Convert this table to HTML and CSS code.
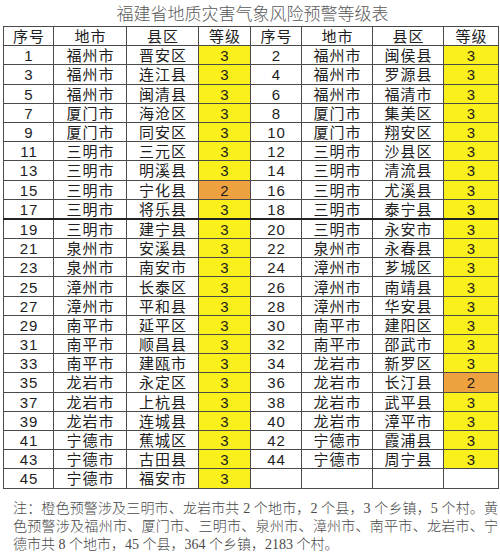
FILE: index.html
```html
<!DOCTYPE html>
<html lang="zh">
<head>
<meta charset="utf-8">
<link rel="stylesheet" href="styles.css">
</head>
<body>
<div class="page">
  <h1 class="title">福建省地质灾害气象风险预警等级表</h1>
  <table class="grid">
    <colgroup>
      <col class="c-no"><col class="c-city"><col class="c-county"><col class="c-lv">
      <col class="c-no2"><col class="c-city2"><col class="c-county2"><col class="c-lv2">
    </colgroup>
    <thead>
      <tr><th>序号</th><th>地市</th><th>县区</th><th>等级</th><th>序号</th><th>地市</th><th>县区</th><th>等级</th></tr>
    </thead>
    <tbody>
      <tr><td>1</td><td>福州市</td><td>晋安区</td><td class="y">3</td><td>2</td><td>福州市</td><td>闽侯县</td><td class="y">3</td></tr>
      <tr><td>3</td><td>福州市</td><td>连江县</td><td class="y">3</td><td>4</td><td>福州市</td><td>罗源县</td><td class="y">3</td></tr>
      <tr><td>5</td><td>福州市</td><td>闽清县</td><td class="y">3</td><td>6</td><td>福州市</td><td>福清市</td><td class="y">3</td></tr>
      <tr><td>7</td><td>厦门市</td><td>海沧区</td><td class="y">3</td><td>8</td><td>厦门市</td><td>集美区</td><td class="y">3</td></tr>
      <tr><td>9</td><td>厦门市</td><td>同安区</td><td class="y">3</td><td>10</td><td>厦门市</td><td>翔安区</td><td class="y">3</td></tr>
      <tr><td>11</td><td>三明市</td><td>三元区</td><td class="y">3</td><td>12</td><td>三明市</td><td>沙县区</td><td class="y">3</td></tr>
      <tr><td>13</td><td>三明市</td><td>明溪县</td><td class="y">3</td><td>14</td><td>三明市</td><td>清流县</td><td class="y">3</td></tr>
      <tr><td>15</td><td>三明市</td><td>宁化县</td><td class="o">2</td><td>16</td><td>三明市</td><td>尤溪县</td><td class="y">3</td></tr>
      <tr class="thick"><td>17</td><td>三明市</td><td>将乐县</td><td class="y">3</td><td>18</td><td>三明市</td><td>泰宁县</td><td class="y">3</td></tr>
      <tr><td>19</td><td>三明市</td><td>建宁县</td><td class="y">3</td><td>20</td><td>三明市</td><td>永安市</td><td class="y">3</td></tr>
      <tr><td>21</td><td>泉州市</td><td>安溪县</td><td class="y">3</td><td>22</td><td>泉州市</td><td>永春县</td><td class="y">3</td></tr>
      <tr><td>23</td><td>泉州市</td><td>南安市</td><td class="y">3</td><td>24</td><td>漳州市</td><td>芗城区</td><td class="y">3</td></tr>
      <tr><td>25</td><td>漳州市</td><td>长泰区</td><td class="y">3</td><td>26</td><td>漳州市</td><td>南靖县</td><td class="y">3</td></tr>
      <tr><td>27</td><td>漳州市</td><td>平和县</td><td class="y">3</td><td>28</td><td>漳州市</td><td>华安县</td><td class="y">3</td></tr>
      <tr><td>29</td><td>南平市</td><td>延平区</td><td class="y">3</td><td>30</td><td>南平市</td><td>建阳区</td><td class="y">3</td></tr>
      <tr><td>31</td><td>南平市</td><td>顺昌县</td><td class="y">3</td><td>32</td><td>南平市</td><td>邵武市</td><td class="y">3</td></tr>
      <tr><td>33</td><td>南平市</td><td>建瓯市</td><td class="y">3</td><td>34</td><td>龙岩市</td><td>新罗区</td><td class="y">3</td></tr>
      <tr><td>35</td><td>龙岩市</td><td>永定区</td><td class="y">3</td><td>36</td><td>龙岩市</td><td>长汀县</td><td class="o">2</td></tr>
      <tr><td>37</td><td>龙岩市</td><td>上杭县</td><td class="y">3</td><td>38</td><td>龙岩市</td><td>武平县</td><td class="y">3</td></tr>
      <tr><td>39</td><td>龙岩市</td><td>连城县</td><td class="y">3</td><td>40</td><td>龙岩市</td><td>漳平市</td><td class="y">3</td></tr>
      <tr><td>41</td><td>宁德市</td><td>蕉城区</td><td class="y">3</td><td>42</td><td>宁德市</td><td>霞浦县</td><td class="y">3</td></tr>
      <tr><td>43</td><td>宁德市</td><td>古田县</td><td class="y">3</td><td>44</td><td>宁德市</td><td>周宁县</td><td class="y">3</td></tr>
      <tr><td>45</td><td>宁德市</td><td>福安市</td><td class="y">3</td><td></td><td></td><td></td><td></td></tr>
    </tbody>
  </table>
  <p class="note">注：橙色预警涉及三明市、龙岩市共 2 个地市，2 个县，3 个乡镇，5 个村。黄色预警涉及福州市、厦门市、三明市、泉州市、漳州市、南平市、龙岩市、宁德市共 8 个地市，45 个县，364 个乡镇，2183 个村。</p>
</div>
</body>
</html>
```

FILE: styles.css
```css
html, body {
  margin: 0;
  padding: 0;
  background: #ffffff;
}

.page {
  width: 500px;
  height: 559px;
  padding: 0 2px 0 3px;
  box-sizing: border-box;
  overflow: hidden;
}

.title {
  margin: 0;
  height: 26px;
  line-height: 30px;
  text-align: center;
  font-family: "Liberation Serif", "Noto Sans CJK SC", serif;
  font-weight: 300;
  font-size: 17px;
  color: #5a5a5a;
  padding-left: 4px;
}

.grid {
  border-collapse: collapse;
  table-layout: fixed;
  width: 495px;
  font-family: "Liberation Sans", "Noto Sans CJK SC", sans-serif;
  font-size: 15px;
  color: #1e1e1e;
}

.c-no { width: 50px; }
.c-city { width: 73px; }
.c-county { width: 72px; }
.c-lv { width: 52px; }
.c-no2 { width: 51px; }
.c-city2 { width: 71px; }
.c-county2 { width: 71px; }
.c-lv2 { width: 55px; }

.grid th,
.grid td {
  border: 1px solid #4a4a4a;
  padding: 1px 0 0 1px;
  height: 17.2px;
  line-height: 17px;
  text-align: center;
  vertical-align: middle;
  font-weight: normal;
  white-space: nowrap;
  overflow: hidden;
  letter-spacing: 1px;
}

.grid .y {
  background: #faf01c;
}

.grid .o {
  background: #eea23f;
}

.grid tr.thick td {
  border-bottom: 2px solid #222;
}

.note {
  margin: 11px 0 0 10px;
  font-family: "Liberation Serif", "Noto Sans CJK SC", serif;
  font-weight: 300;
  font-size: 14px;
  line-height: 18px;
  color: #4a4a4a;
  text-align: justify;
}
```
